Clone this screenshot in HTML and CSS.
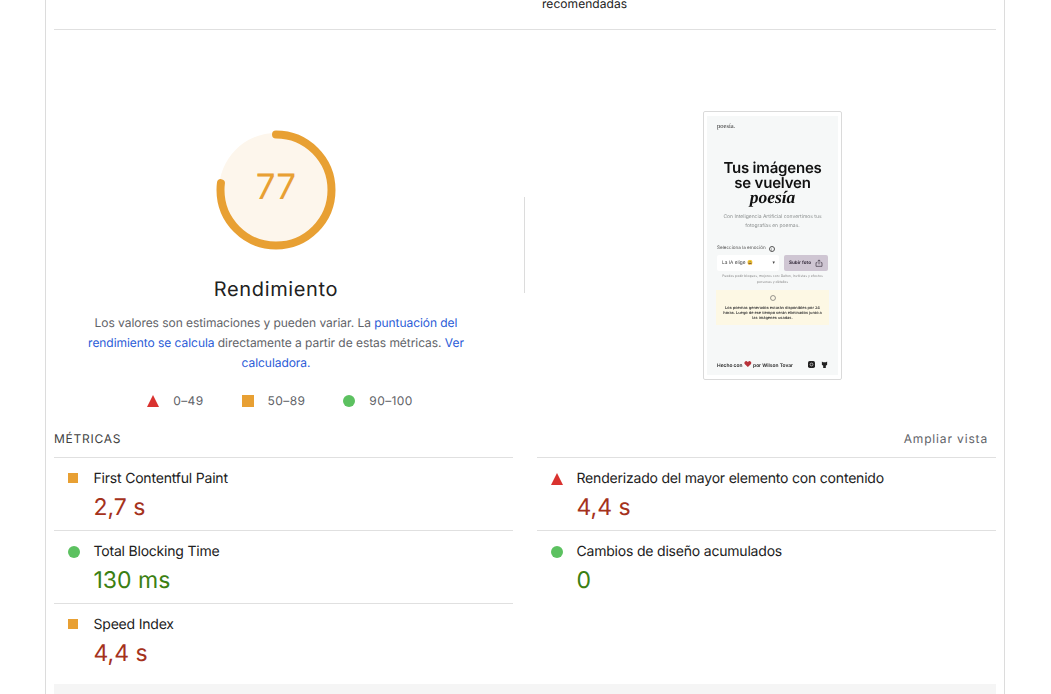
FILE: index.html
```html
<!DOCTYPE html>
<html lang="es">
<head>
<meta charset="utf-8">
<title>Rendimiento</title>
<link rel="stylesheet" href="styles.css">
</head>
<body>
<main class="frame">
  <div class="top-row"><span class="top-text">recomendadas</span></div>
  <section class="overview">
    <div class="score-col">
      <svg class="gauge" width="120" height="120" viewBox="0 0 120 120">
        <circle class="gauge-bg" cx="60" cy="60" r="57"></circle>
        <circle class="gauge-arc" cx="60" cy="60" r="55.5" pathLength="100" stroke-dasharray="77 100" transform="rotate(-90 60 60)"></circle>
      </svg>
      <div class="gauge-num">77</div>
      <h1 class="title">Rendimiento</h1>
      <p class="desc">Los valores son estimaciones y pueden variar. La <a href="#">puntuación del rendimiento se calcula</a> directamente a partir de estas métricas. <a href="#">Ver calculadora.</a></p>
      <ul class="legend">
        <li class="legend-item"><span class="ico tri"></span>0–49</li>
        <li class="legend-item"><span class="ico sq"></span>50–89</li>
        <li class="legend-item"><span class="ico dot"></span>90–100</li>
      </ul>
    </div>
    <div class="divider"></div>
    <div class="shot-col">
      <div class="shot">
        <div class="s-logo">poesía.</div>
        <div class="s-h">Tus imágenes<br>se vuelven<br><em>poesía</em></div>
        <div class="s-sub">Con Inteligencia Artificial convertimos tus<br>fotografías en poemas.</div>
        <div class="s-label">Selecciona la emoción <span class="s-i">i</span></div>
        <div class="s-controls">
          <div class="s-select"><span>La IA elige 😀</span><span>▾</span></div>
          <div class="s-btn"><span>Subir foto</span>
            <svg width="8" height="8" viewBox="0 0 12 12"><path d="M6 8V1.5M3.8 3.5 6 1.3l2.2 2.2M3.5 5.5H1.5v5.5h9V5.5H8.5" fill="none" stroke="#3a3040" stroke-width="1"/></svg>
          </div>
        </div>
        <div class="s-note">Puedes pedir bloques, mejores con: Dalton, Invitistas y efectos<br>personas y détalles</div>
        <div class="s-warn">
          <svg width="6" height="6" viewBox="0 0 8 8"><circle cx="4" cy="4" r="3.3" fill="none" stroke="#555" stroke-width=".8"/></svg>
          <div>Los poemas generados estarán disponibles por 24<br>horas. Luego de ese tiempo serán eliminados junto a<br>las imágenes usadas.</div>
        </div>
        <div class="s-foot">
          <span>Hecho con <span class="s-heart">❤</span> por Wilson Tovar</span>
          <span class="s-icons">
            <svg width="7" height="7" viewBox="0 0 8 8"><rect width="8" height="8" rx="2" fill="#222"/><circle cx="4" cy="4" r="1.6" fill="none" stroke="#eee" stroke-width=".7"/></svg>
            <svg width="7" height="7" viewBox="0 0 8 8"><path d="M1 .6l1.3.9h3.4L7 .6v3.6L5.5 5.4V8h-3V5.4L1 4.2z" fill="#222"/></svg>
          </span>
        </div>
      </div>
    </div>
  </section>
  <div class="metrics-head">
    <span class="metrics-label">MÉTRICAS</span>
    <span class="metrics-toggle">Ampliar vista</span>
  </div>
  <section class="metrics">
    <div class="metric"><span class="ico sq small"></span><div><div class="m-name">First Contentful Paint</div><div class="m-val avg">2,7 s</div></div></div>
    <div class="metric"><span class="ico tri"></span><div><div class="m-name">Renderizado del mayor elemento con contenido</div><div class="m-val bad">4,4 s</div></div></div>
    <div class="metric"><span class="ico dot"></span><div><div class="m-name">Total Blocking Time</div><div class="m-val good">130 ms</div></div></div>
    <div class="metric"><span class="ico dot"></span><div><div class="m-name">Cambios de diseño acumulados</div><div class="m-val good">0</div></div></div>
    <div class="metric"><span class="ico sq small"></span><div><div class="m-name">Speed Index</div><div class="m-val avg">4,4 s</div></div></div>
  </section>
  <div class="bottom-box"></div>
</main>
</body>
</html>
```
FILE: styles.css
```css
* { box-sizing: border-box; }
html, body { margin: 0; height: 694px; overflow: hidden; background: #fff; }
body { font-family: Inter, "Liberation Sans", sans-serif; color: #212121; text-rendering: geometricPrecision; }
.frame {
  width: 960px;
  margin-left: 45px;
  margin-top: -8px;
  height: 720px;
  padding: 0 8px;
  border-left: 1px solid #dcdcdc;
  border-right: 1px solid #dcdcdc;
}
.top-row { height: 38px; border-bottom: 1px solid #e0e0e0; padding-left: 488px; }
.top-text { font-size: 12px; line-height: 24px; display: block; color: #212121; letter-spacing: .05px; }
.overview { display: flex; height: 399px; }
.score-col { width: 444px; position: relative; display: flex; flex-direction: column; align-items: center; padding-top: 100px; }
.gauge { display: block; }
.gauge-bg { fill: #fdf6ec; }
.gauge-arc { fill: none; stroke: #e8a033; stroke-width: 8; stroke-linecap: round; }
.gauge-num { position: absolute; top: 135px; left: 0; right: 0; text-align: center; font-size: 35px; line-height: 44px; color: #e8a033; }
.title { font-size: 20px; font-weight: 400; line-height: 28px; margin: 25px 0 0; color: #212121; letter-spacing: .65px; }
.desc { width: 394px; margin: 10px 0 0; text-align: center; font-size: 12px; line-height: 20px; color: #5f6368; letter-spacing: -.05px; }
.desc a { color: #2a5bd7; text-decoration: none; }
.legend { list-style: none; display: flex; gap: 38px; margin: 19px 0 0; padding: 0 0 0 8px; font-size: 12px; line-height: 18px; color: #5f6368; letter-spacing: .4px; }
.legend-item { display: flex; align-items: center; gap: 14px; }
.ico { display: block; flex: none; width: 12px; height: 12px; }
.sq { background: #e8a033; }
.dot { background: #5cc160; border-radius: 50%; }
.tri { width: 0; height: 0; border-left: 6px solid transparent; border-right: 6px solid transparent; border-bottom: 12px solid #d9322f; }
.divider { width: 1px; height: 96px; margin: 167px 0 0 26px; background: #dcdcdc; }
.shot-col { flex: 1; display: flex; justify-content: flex-start; align-items: flex-start; padding-top: 81px; padding-left: 178px; }
.shot {
  width: 139px;
  height: 269px;
  border: 1px solid #dadada;
  border-radius: 2px;
  background: #fff;
  background-image: linear-gradient(#f6f8f8, #f6f8f8);
  background-size: 131px 259px;
  background-position: center;
  background-repeat: no-repeat;
  padding: 10px 13px 0;
  color: #1a1a1a;
  filter: blur(.35px);
}
.s-logo { font-family: "Liberation Serif", serif; font-size: 6.5px; line-height: 9px; color: #333; }
.s-h { margin-top: 29px; text-align: center; font-size: 15px; line-height: 15px; font-weight: 600; letter-spacing: -.2px; color: #111; }
.s-h em { font-family: "Liberation Serif", serif; font-size: 17.5px; font-weight: 700; letter-spacing: 0; }
.s-sub { margin-top: 8px; text-align: center; font-size: 5px; line-height: 9px; color: #8b8f8f; white-space: nowrap; }
.s-label { margin-top: 14px; font-size: 4.6px; line-height: 8px; color: #555; display: flex; gap: 3px; align-items: center; }
.s-i { width: 6px; height: 6px; border: .6px solid #555; border-radius: 50%; font-size: 4px; line-height: 5px; text-align: center; }
.s-controls { display: flex; gap: 5px; margin-top: 2px; }
.s-select { width: 62px; height: 16px; background: #fff; border-radius: 2px; display: flex; justify-content: space-between; align-items: center; padding: 0 4px 0 5px; font-size: 4.8px; color: #444; }
.s-btn { flex: 1; height: 16px; background: #cfc6d3; border-radius: 2px; display: flex; justify-content: space-between; align-items: center; padding: 0 5px; font-size: 4.6px; font-weight: 700; color: #3a3040; }
.s-note { margin-top: 3px; text-align: center; font-size: 3.4px; line-height: 5.5px; color: #888; white-space: nowrap; }
.s-warn { margin: 5px -1px 0; height: 35px; background: #fdf8e4; display: flex; flex-direction: column; align-items: center; gap: 4px; padding: 5px 0 0; text-align: center; font-size: 3.9px; line-height: 5px; font-weight: 600; color: #333; white-space: nowrap; }
.s-foot { margin-top: 35px; display: flex; justify-content: space-between; align-items: center; font-size: 4.9px; font-weight: 600; color: #222; }
.s-heart { color: #b8323a; font-size: 8px; line-height: 8px; }
.s-icons { display: flex; gap: 6px; }
.metrics-head { display: flex; justify-content: space-between; align-items: center; height: 18px; padding-right: 8px; font-size: 12px; color: #5f6368; }
.metrics-label { color: #424242; letter-spacing: .75px; }
.metrics-toggle { letter-spacing: .85px; }
.metrics { display: grid; grid-template-columns: 459px 459px; column-gap: 24px; margin-top: 10px; }
.metric { height: 73px; border-top: 1px solid #e0e0e0; display: grid; grid-template-columns: 12px 1fr; column-gap: 13.5px; padding-left: 14px; }
.metric .ico { margin-top: 15px; }
.metric .small { width: 10px; height: 10px; margin-top: 15px; }
.m-name { font-size: 14px; line-height: 20px; margin-top: 11px; color: #212121; letter-spacing: -.2px; }
.m-val { font-size: 23px; line-height: 32px; margin-top: 2px; }
.avg, .bad { color: #a5321c; }
.good { color: #3b8012; }
.bottom-box { height: 40px; margin-top: 8px; background: #f5f5f5; }
```
